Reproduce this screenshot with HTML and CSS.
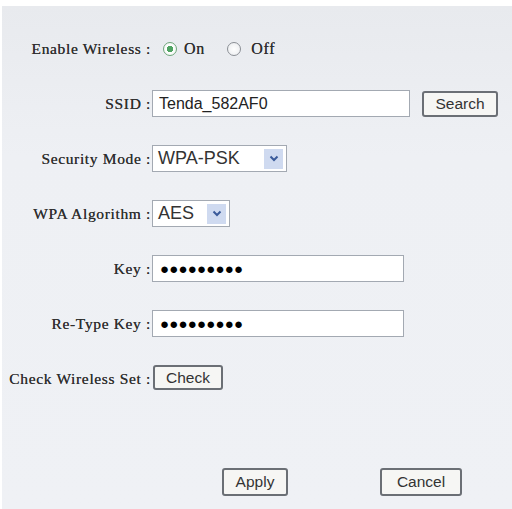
FILE: index.html
```html
<!DOCTYPE html>
<html>
<head>
<meta charset="utf-8">
<link rel="stylesheet" href="styles.css">
</head>
<body>
<div class="page">
  <div class="form">
    <div class="row">
      <div class="label">Enable Wireless :</div>
      <div class="ctrl radios">
        <span class="radio checked"></span><span class="rtext on">On</span>
        <span class="radio"></span><span class="rtext off">Off</span>
      </div>
    </div>
    <div class="row">
      <div class="label">SSID :</div>
      <div class="ctrl">
        <div class="input ssid">Tenda_582AF0</div>
        <div class="btn search">Search</div>
      </div>
    </div>
    <div class="row">
      <div class="label">Security Mode :</div>
      <div class="ctrl">
        <div class="select mode"><span class="val">WPA-PSK</span><span class="arrow"><svg width="10" height="7" viewBox="0 0 10 7"><path d="M1.5 1.5 L5 5 L8.5 1.5" fill="none" stroke="#3a5a9a" stroke-width="2"/></svg></span></div>
      </div>
    </div>
    <div class="row">
      <div class="label">WPA Algorithm :</div>
      <div class="ctrl">
        <div class="select algo"><span class="val">AES</span><span class="arrow"><svg width="10" height="7" viewBox="0 0 10 7"><path d="M1.5 1.5 L5 5 L8.5 1.5" fill="none" stroke="#3a5a9a" stroke-width="2"/></svg></span></div>
      </div>
    </div>
    <div class="row">
      <div class="label">Key :</div>
      <div class="ctrl">
        <div class="input key">●●●●●●●●●</div>
      </div>
    </div>
    <div class="row">
      <div class="label">Re-Type Key :</div>
      <div class="ctrl">
        <div class="input key">●●●●●●●●●</div>
      </div>
    </div>
    <div class="row">
      <div class="label">Check Wireless Set :</div>
      <div class="ctrl">
        <div class="btn check">Check</div>
      </div>
    </div>
  </div>
  <div class="footer">
    <div class="btn apply">Apply</div>
    <div class="btn cancel">Cancel</div>
  </div>
</div>
</body>
</html>
```
FILE: styles.css
```css
html, body {
  margin: 0;
  padding: 0;
  background: #ffffff;
}
.page {
  margin: 6px 0 0 2px;
  height: 503px;
  background: linear-gradient(#e8eaee, #eef0f4 30%, #eff1f5);
  box-sizing: border-box;
  padding-top: 15px;
}
.form {
  display: flex;
  flex-direction: column;
}
.row {
  display: grid;
  grid-template-columns: 149px 1fr;
  column-gap: 1px;
  height: 55px;
  align-items: center;
}
.label {
  text-align: right;
  font-family: "Liberation Serif", "Times New Roman", serif;
  font-size: 15.5px;
  color: #2e2e2e;
  white-space: nowrap;
  letter-spacing: 0.65px;
  text-shadow: 0 0 0.4px #444;
}
.ctrl {
  display: flex;
  align-items: center;
  font-family: "Liberation Sans", Arial, sans-serif;
}
.radios {
  font-family: "Liberation Serif", serif;
  font-size: 16px;
  color: #2e2e2e;
  padding-left: 11px;
  text-shadow: 0 0 0.4px #444;
}
.radio {
  width: 14px;
  height: 14px;
  border-radius: 50%;
  border: 1.5px solid #8b8f95;
  background: radial-gradient(#ffffff, #e9ebee);
  box-sizing: border-box;
}
.radio.checked {
  border-color: #6fa67c;
  background: radial-gradient(#4fa362 0 3px, #ffffff 3.5px, #e9efea);
}
.rtext {
  letter-spacing: 0.8px;
}
.rtext.on {
  margin-left: 7px;
  margin-right: 22px;
}
.rtext.off {
  margin-left: 10px;
}
.input {
  height: 27px;
  box-sizing: border-box;
  border: 1px solid #a3a9b2;
  background: #fff;
  font-size: 16px;
  color: #222;
  padding-left: 6px;
  line-height: 25px;
}
.ssid {
  width: 258px;
}
.key {
  width: 252px;
  font-size: 15px;
  letter-spacing: 0.2px;
  padding-left: 7px;
  color: #000;
}
.btn {
  box-sizing: border-box;
  border: 2px solid #6b6f75;
  border-radius: 3px;
  background: #f6f6f4;
  font-family: "Liberation Sans", Arial, sans-serif;
  font-size: 15.5px;
  color: #333;
  text-align: center;
  height: 26px;
  line-height: 22px;
}
.search {
  width: 76px;
  margin-left: 12px;
}
.check {
  width: 70px;
  margin-left: 1px;
  height: 25px;
  margin-top: -2px;
}
.select {
  height: 27px;
  box-sizing: border-box;
  border: 1px solid #a3a9b2;
  background: #fff;
  display: flex;
  align-items: center;
  font-size: 18px;
  color: #333;
  padding: 0 3px 0 5px;
  justify-content: space-between;
}
.mode { width: 135px; }
.algo { width: 78px; }
.arrow {
  width: 19px;
  height: 20px;
  background: #cfdaf0;
  display: flex;
  align-items: center;
  justify-content: center;
}
.footer {
  display: flex;
  padding-left: 220px;
  margin-top: 62px;
}
.apply {
  width: 66px;
  height: 28px;
  line-height: 24px;
}
.cancel {
  width: 82px;
  height: 28px;
  line-height: 24px;
  margin-left: 92px;
}
```
